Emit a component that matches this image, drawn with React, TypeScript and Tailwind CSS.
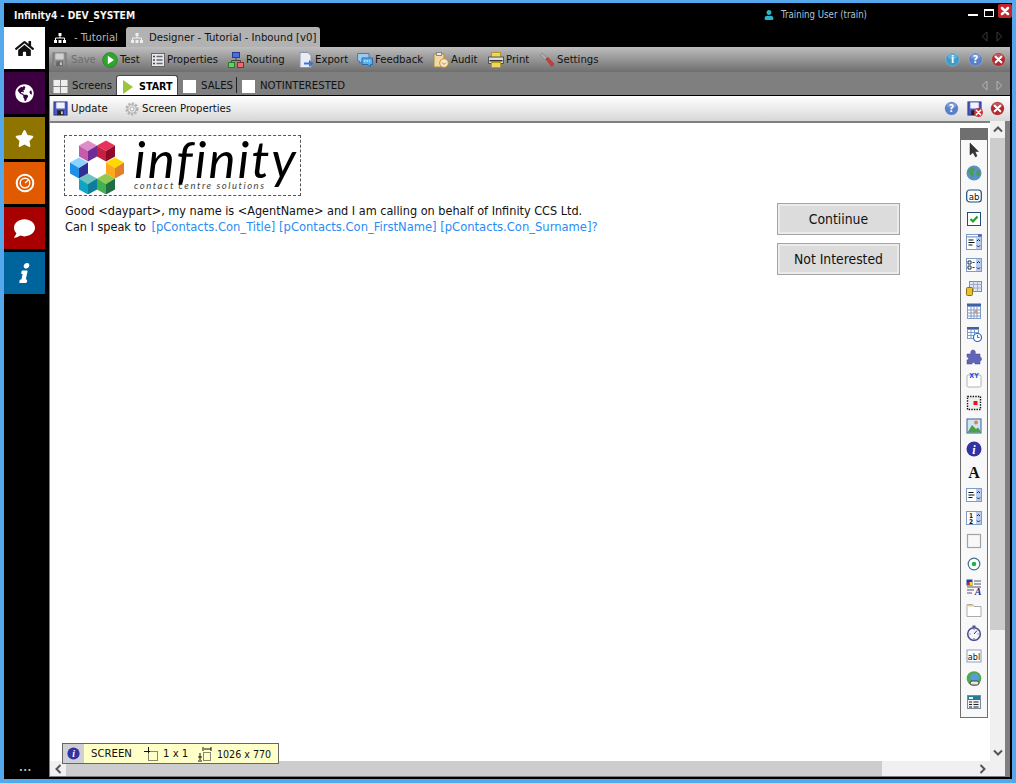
import type { ReactNode } from "react";
import { FaComment, FaGlobeAmericas, FaHome, FaInfo, FaStar, FaUser } from "react-icons/fa";

const font = { fontFamily: '"DejaVu Sans Condensed", "DejaVu Sans", sans-serif', fontStretch: "condensed" } as const;

function Ico({ size = 16, children }: { size?: number; children: ReactNode }) {
	return (
		<svg width={size} height={size} viewBox="0 0 16 16" className="shrink-0">
			{children}
		</svg>
	);
}

function X({ cx = 8, cy = 8, r = 3, w = 2.2 }: { cx?: number; cy?: number; r?: number; w?: number }) {
	return (
		<path
			d={`M${cx - r} ${cy - r}L${cx + r} ${cy + r}M${cx + r} ${cy - r}L${cx - r} ${cy + r}`}
			stroke="#fff"
			strokeWidth={w}
			strokeLinecap="round"
		/>
	);
}

function Orb({ kind }: { kind: "info" | "help" | "close" }) {
	const fill = kind === "info" ? "#3d9cc8" : kind === "help" ? "#5a80c8" : "#b02a30";
	return (
		<Ico size={15}>
			<circle cx="8" cy="8" r="7.2" fill={fill} stroke="#ffffff55" strokeWidth="0.6" />
			<ellipse cx="8" cy="4.6" rx="5" ry="3" fill="#ffffff33" />
			{kind === "close" ? (
				<X />
			) : (
				<text x="8" y="12" textAnchor="middle" fontSize="11" fontWeight="700" fill="#fff" fontFamily="DejaVu Sans">
					{kind === "info" ? "i" : "?"}
				</text>
			)}
		</Ico>
	);
}

function SaveIco({ gray }: { gray?: boolean }) {
	return (
		<Ico size={15}>
			<rect x="1" y="1" width="14" height="14" fill={gray ? "#8d8d8d" : "#4a58c4"} stroke={gray ? "#777" : "#2a3488"} />
			<rect x="3.5" y="1.5" width="9" height="6.5" fill={gray ? "#d0d0d0" : "#f0f4ff"} />
			<rect x="4.5" y="10" width="7" height="5" fill={gray ? "#666" : "#222"} />
			<rect x="8.5" y="11" width="2" height="3" fill="#ccc" />
		</Ico>
	);
}

function Grid2({ size = 15 }: { size?: number }) {
	return (
		<Ico size={size}>
			<rect x="0.5" y="1" width="7" height="6.5" fill="#eee" />
			<rect x="8.5" y="1" width="7" height="6.5" fill="#eee" />
			<rect x="0.5" y="8.5" width="7" height="6.5" fill="#eee" />
			<rect x="8.5" y="8.5" width="7" height="6.5" fill="#eee" />
		</Ico>
	);
}

function OrgIco({ color }: { color: string }) {
	return (
		<svg width="12" height="10" viewBox="0 0 12 10" className="shrink-0">
			<rect x="4.5" y="0" width="3" height="3" fill={color} />
			<path d="M6 3V5M1.5 7V5H10.5V7" stroke={color} fill="none" />
			<rect x="0" y="7" width="3" height="3" fill={color} />
			<rect x="4.5" y="7" width="3" height="3" fill={color} />
			<rect x="9" y="7" width="3" height="3" fill={color} />
		</svg>
	);
}

function TestIco() {
	return (
		<Ico>
			<circle cx="8" cy="8" r="7.4" fill="#2fa52f" stroke="#1a7a1a" strokeWidth="0.6" />
			<path d="M5.8 3.8L12 8L5.8 12.2Z" fill="#fff" />
		</Ico>
	);
}

function PropsIco() {
	return (
		<Ico>
			<rect x="1.5" y="1.5" width="13" height="13" fill="#e8e8e8" stroke="#666" />
			<path d="M3 4.5h2M3 8h2M3 11.5h2" stroke="#445" strokeWidth="1.5" />
			<path d="M6.5 4.5h6M6.5 8h6M6.5 11.5h6" stroke="#667" strokeWidth="1.5" />
		</Ico>
	);
}

function RoutingIco() {
	return (
		<Ico>
			<rect x="4.5" y="0.5" width="7" height="5" fill="#4a6ee0" stroke="#2a3a90" />
			<path d="M8 6v2.5M3.5 11V8.5h9V11" stroke="#444" fill="none" />
			<rect x="0.5" y="10.5" width="6" height="5" fill="#66d066" stroke="#2a7a2a" />
			<rect x="9.5" y="10.5" width="6" height="5" fill="#f06a6a" stroke="#902a2a" />
		</Ico>
	);
}

function ExportIco() {
	return (
		<Ico>
			<path d="M2 0.5H10L13 3.5V15.5H2Z" fill="#e8ecf4" stroke="#8a94a8" />
			<path d="M6 10.5H11V8L15.5 11.5L11 15V12.5H6Z" fill="#3a74d8" />
		</Ico>
	);
}

function FeedbackIco() {
	return (
		<Ico>
			<path d="M0.5 1.5H12V9H5L2.5 11.5V9H0.5Z" fill="#9bc8f0" stroke="#4a7cb0" />
			<path d="M5 6H15.5V12.5H13.5V15L11 12.5H5Z" fill="#5ab0e8" stroke="#2a6ca8" />
			<path d="M7 9h6" stroke="#fff" strokeDasharray="1.5 1" />
		</Ico>
	);
}

function AuditIco() {
	return (
		<Ico>
			<rect x="1" y="2" width="10" height="13" fill="#f0d9a8" stroke="#b08a40" />
			<rect x="3.5" y="0.5" width="5" height="3" fill="#e8e8e8" stroke="#888" />
			<circle cx="11" cy="11" r="4.3" fill="#f8e8c8" stroke="#d88a20" />
			<path d="M9 10.5l2 2 2-2" stroke="#888" fill="none" />
		</Ico>
	);
}

function PrintIco() {
	return (
		<Ico>
			<rect x="3.5" y="0.5" width="9" height="5" fill="#f0d860" stroke="#b09a20" />
			<rect x="0.5" y="5" width="15" height="6.5" fill="#dcdcdc" stroke="#555" />
			<rect x="1.5" y="8" width="13" height="1.5" fill="#333" />
			<rect x="3.5" y="10.5" width="9" height="5" fill="#f0d860" stroke="#b09a20" />
		</Ico>
	);
}

function WrenchIco() {
	return (
		<Ico>
			<path d="M1 3L3 1L8 6L6 8Z" fill="#aaa" stroke="#777" strokeWidth="0.5" />
			<path d="M7 7L9 5.5L15 12L12.8 14.5Z" fill="#d03a3a" stroke="#902020" strokeWidth="0.5" />
		</Ico>
	);
}

function GearIco() {
	return (
		<Ico>
			<circle cx="8" cy="8" r="5.4" fill="none" stroke="#b4b4b4" strokeWidth="2.4" strokeDasharray="2.2 1.3" />
			<circle cx="8" cy="8" r="4.2" fill="#eaeaea" stroke="#aaa" />
			<circle cx="8" cy="8" r="2" fill="#f8f8f8" stroke="#aaa" />
		</Ico>
	);
}

function ToolItem({ icon, label, gray, className }: { icon: ReactNode; label: string; gray?: boolean; className?: string }) {
	return (
		<div className={`flex items-center whitespace-nowrap ${className ?? "gap-[2px]"}`}>
			{icon}
			<span className={gray ? "text-[#6e6e6e]" : "text-[#111]"}>{label}</span>
		</div>
	);
}

function Arrows({ color }: { color: string }) {
	return (
		<div className="flex items-center gap-[8px]">
			<svg width="7" height="11" viewBox="0 0 7 11">
				<path d="M6 1L1 5.5L6 10Z" fill="none" stroke={color} />
			</svg>
			<svg width="7" height="11" viewBox="0 0 7 11">
				<path d="M1 1L6 5.5L1 10Z" fill="none" stroke={color} />
			</svg>
		</div>
	);
}

function Cube({ cx, cy, top, left, right }: { cx: number; cy: number; top: string; left: string; right: string }) {
	return (
		<g>
			<path d={`M${cx} ${cy - 10.5}L${cx + 9} ${cy - 5.5}L${cx} ${cy}L${cx - 9} ${cy - 5.5}Z`} fill={top} />
			<path d={`M${cx - 9} ${cy - 5.5}L${cx} ${cy}V${cy + 10.5}L${cx - 9} ${cy + 5.5}Z`} fill={left} />
			<path d={`M${cx + 9} ${cy - 5.5}L${cx} ${cy}V${cy + 10.5}L${cx + 9} ${cy + 5.5}Z`} fill={right} />
		</g>
	);
}

function Logo() {
	const logoFont = { fontFamily: 'Lato, sans-serif', fontStretch: "normal" } as const;
	return (
		<div className="absolute left-[14px] top-[12px] flex h-[61px] w-[237px] border border-dashed border-[#555] bg-white">
			<svg width="56" height="56" viewBox="0 0 56 56" className="ml-[4px] mt-[2px] shrink-0">
				<Cube cx={19} cy={13} top="#e08cc8" left="#c45cab" right="#6f2c96" />
				<Cube cx={37} cy={13} top="#e8305c" left="#c42040" right="#8c0a28" />
				<Cube cx={10} cy={30} top="#8ad4ff" left="#1e90e8" right="#2e3096" />
				<Cube cx={46} cy={30} top="#ffd800" left="#ffa81e" right="#e08028" />
				<Cube cx={19} cy={46} top="#70c4c0" left="#10a4c4" right="#107c9c" />
				<Cube cx={37} cy={46} top="#90c850" left="#40b050" right="#1e7040" />
			</svg>
			<div className="ml-[9px] flex flex-col">
				<span className="mt-[-7px] h-[50px] text-[51px] leading-[60px] tracking-[2px] text-black italic" style={logoFont}>
					infinity
				</span>
				<span className="mt-[1px] whitespace-nowrap text-[9.5px] leading-[12px] tracking-[1.55px] text-[#444] italic" style={logoFont}>
					contact centre solutions
				</span>
			</div>
		</div>
	);
}

function SpinBox({ children, tall }: { children: ReactNode; tall?: boolean }) {
	return (
		<Ico>
			{tall && <rect x="0.5" y="0.5" width="15" height="2.5" fill="#fff" stroke="#7f9cc8" />}
			{tall && <rect x="12" y="0.5" width="3.5" height="2.5" fill="#3f5fa8" />}
			<rect x="0.5" y={tall ? 3 : 1.5} width="15" height={tall ? 12.5 : 13} fill="#fff" stroke="#7f9cc8" />
			<rect x="10" y={tall ? 3.5 : 2} width="5" height={tall ? 11.5 : 12} fill="#b8cdf0" />
			<path d={tall ? "M11 7l1.5-1.5L14 7M11 11.5l1.5 1.5L14 11.5" : "M11 6l1.5-1.5L14 6M11 10.5l1.5 1.5L14 10.5"} stroke="#223" fill="none" />
			{children}
		</Ico>
	);
}

const toolbox: ReactNode[] = [
	<Ico key="cursor">
		<path d="M4 1V13L7 10.5L9.5 15L11 14L9 9.5H12.5Z" fill="#333" stroke="#222" strokeWidth="0.5" />
	</Ico>,
	<Ico key="globe">
		<circle cx="8" cy="8" r="7.5" fill="#5a8fd0" />
		<path d="M3 4L7 2L9 4L7 7L8 10L6 13L4 9L2 7ZM10 6L14 5L14.5 10L11 12Z" fill="#4c9e4c" />
	</Ico>,
	<Ico key="ab">
		<rect x="0.7" y="2" width="14.6" height="12" rx="3" fill="#fff" stroke="#1f4f78" strokeWidth="1.2" />
		<text x="8" y="11.5" textAnchor="middle" fontSize="9.5" fill="#111" fontFamily="DejaVu Sans">ab</text>
	</Ico>,
	<Ico key="check">
		<rect x="1.5" y="1.5" width="13" height="13" fill="#fff" stroke="#1f4f78" />
		<path d="M4.5 8L7 10.5L11.5 5.5" stroke="#22a022" strokeWidth="2.2" fill="none" />
	</Ico>,
	<SpinBox key="list" tall>
		<path d="M2.5 6h5M2.5 8.5h6M2.5 11h4" stroke="#111" />
	</SpinBox>,
	<SpinBox key="checks">
		<path d="M2 4h3v3H2ZM2 9h3v3H2Z" fill="none" stroke="#234" />
		<path d="M6.5 5.5h2M6.5 10.5h2" stroke="#234" />
	</SpinBox>,
	<Ico key="dbgrid">
		<rect x="3.5" y="1.5" width="12" height="10" fill="#dfe6f2" stroke="#7f8ca8" />
		<path d="M3.5 4.5h12M3.5 8h12M7.5 1.5v10M11.5 1.5v10" stroke="#a0accc" />
		<rect x="0.5" y="7.5" width="6" height="8" rx="1" fill="#e8c030" stroke="#8a7010" />
	</Ico>,
	<Ico key="cal">
		<rect x="1" y="0.5" width="14" height="3" fill="#3f5fa8" />
		<rect x="1.5" y="3.5" width="13" height="12" fill="#fff" stroke="#7f9cc8" />
		<path d="M1.5 7h13M1.5 10h13M1.5 13h13M5 3.5v12M8 3.5v12M11 3.5v12" stroke="#7f9cc8" />
		<rect x="8.5" y="7.5" width="2.5" height="2.5" fill="#e88a60" />
	</Ico>,
	<Ico key="calclock">
		<rect x="1" y="1" width="12" height="2.5" fill="#3f5fa8" />
		<rect x="1.5" y="3.5" width="11" height="9" fill="#fff" stroke="#7f9cc8" />
		<path d="M1.5 6.5h11M1.5 9.5h11M5 3.5v9M8.5 3.5v9" stroke="#7f9cc8" />
		<circle cx="11.5" cy="11.5" r="4" fill="#fff" stroke="#2a6cd8" strokeWidth="1.2" />
		<path d="M11.5 9v2.5h2" stroke="#2a6cd8" fill="none" />
	</Ico>,
	<Ico key="puzzle">
		<path d="M1 5H5C4 2 6 1 7 1C9 1 10 3 9 5H14V8C16 8 16 12 14 12V15H9C9 13 6 13 6 15H1V11C3 11 3 8 1 8Z" fill="#6264b8" stroke="#44468c" strokeWidth="0.5" />
	</Ico>,
	<Ico key="xy">
		<rect x="1" y="3" width="14" height="12" rx="1.5" fill="#fff" stroke="#aab0b8" />
		<text x="8" y="5.5" textAnchor="middle" fontSize="7" fontWeight="700" fill="#1a50d8" fontFamily="DejaVu Sans">XY</text>
	</Ico>,
	<Ico key="select">
		<rect x="1.5" y="1.5" width="13" height="13" fill="#eee" stroke="#111" strokeWidth="1.4" strokeDasharray="1.4 1.2" />
		<rect x="7.5" y="6" width="4" height="4" fill="#f01010" />
	</Ico>,
	<Ico key="image">
		<rect x="1" y="1" width="14" height="14" fill="#cfe4f4" stroke="#3a5f98" />
		<path d="M1.5 14.5L6 7L10 11L12 9.5L14.5 13V14.5Z" fill="#4c9e4c" />
		<circle cx="10" cy="4.5" r="2" fill="#e8843c" />
	</Ico>,
	<Ico key="info">
		<circle cx="8" cy="8" r="7.5" fill="#3232a4" />
		<text x="8" y="12.5" textAnchor="middle" fontSize="12" fontWeight="700" fontStyle="italic" fill="#fff" fontFamily="Liberation Serif">i</text>
	</Ico>,
	<Ico key="A">
		<text x="8" y="14" textAnchor="middle" fontSize="16" fontWeight="700" fill="#111" fontFamily="Liberation Serif">A</text>
	</Ico>,
	<SpinBox key="text">
		<path d="M2.5 5.5h5M2.5 8h6M2.5 10.5h4" stroke="#111" />
	</SpinBox>,
	<SpinBox key="num">
		<text x="5" y="8" textAnchor="middle" fontSize="6.5" fontWeight="700" fill="#111" fontFamily="DejaVu Sans">1</text>
		<text x="5" y="14" textAnchor="middle" fontSize="6.5" fontWeight="700" fill="#111" fontFamily="DejaVu Sans">2</text>
	</SpinBox>,
	<Ico key="square">
		<rect x="1.5" y="1.5" width="13" height="13" fill="#f8f8f8" stroke="#a0a4a8" strokeWidth="1.2" />
	</Ico>,
	<Ico key="radio">
		<circle cx="8" cy="8" r="5.8" fill="#fff" stroke="#3f6f98" strokeWidth="1.2" />
		<circle cx="8" cy="8" r="2.3" fill="#22b04c" />
	</Ico>,
	<Ico key="format">
		<rect x="0.5" y="0.5" width="6" height="6" fill="#2a3aa8" />
		<rect x="3.5" y="3" width="3" height="3" fill="#f0e020" />
		<rect x="1" y="3.5" width="2.5" height="2.5" fill="#d82020" />
		<path d="M8 2h7M8 5h7M1 8h14M1 11h7M1 14h5" stroke="#556" />
		<text x="12" y="15.5" textAnchor="middle" fontSize="10" fontWeight="700" fontStyle="italic" fill="#1a2f98" fontFamily="Liberation Serif">A</text>
	</Ico>,
	<Ico key="folder">
		<path d="M1 14.5V2.5H6.5L8 4.5H15V14.5Z" fill="#fff" stroke="#a8acb0" />
		<path d="M1.5 3H6.3L7.5 4.5H1.5Z" fill="#f0d060" />
	</Ico>,
	<Ico key="watch">
		<circle cx="8" cy="9" r="6.3" fill="#f4f4fa" stroke="#4a4a90" strokeWidth="1.5" />
		<rect x="6.5" y="0.5" width="3" height="2" fill="#4a4a90" />
		<path d="M8 9L11 5.5" stroke="#333" />
		<path d="M8 4v1M8 13v1M3.5 9h1M11.5 9h1" stroke="#666" />
	</Ico>,
	<Ico key="abl">
		<rect x="1" y="2" width="14" height="12" fill="#fff" stroke="#8aa0c0" />
		<text x="8" y="11.5" textAnchor="middle" fontSize="9" fill="#111" fontFamily="DejaVu Sans">abl</text>
	</Ico>,
	<Ico key="weblink">
		<circle cx="8" cy="7.5" r="7.3" fill="#4caa4c" />
		<path d="M5 3L11 2L14 7L9 11L4 8Z" fill="#5a9cd8" />
		<rect x="4" y="10" width="9" height="4" rx="2" fill="#e8e8e8" stroke="#444" />
	</Ico>,
	<Ico key="form">
		<rect x="1.5" y="1.5" width="13" height="13" fill="#f0f0f0" stroke="#7a8a9a" />
		<rect x="2" y="2" width="12" height="4" fill="#1f7f98" />
		<rect x="3" y="3" width="4" height="2" fill="#eee" />
		<path d="M3 8h3M7.5 8h5M3 10.5h3M7.5 10.5h5M3 13h3M7.5 13h5" stroke="#222" />
	</Ico>,
];

function CanvasButton({ label, className }: { label: string; className: string }) {
	return (
		<div className={`absolute flex h-[32px] w-[123px] items-center justify-center border border-[#a5a5a5] bg-[#dcdcdc] text-[13.8px] text-[#111] shadow-[inset_0_0_0_2px_#ebebeb] ${className}`}>
			{label}
		</div>
	);
}

export default function App() {
	return (
		<div
			className="flex h-[783px] w-[1016px] flex-col overflow-hidden bg-[#56a8ec] pb-[4px] pl-[4px] pr-[4px] pt-[3px] text-[11.25px] leading-[16px]"
			style={font}
		>
			<div className="flex min-h-0 flex-1 flex-col bg-black">
				{/* title bar */}
				<div className="flex h-[24px] shrink-0 items-start justify-between text-white">
					<span className="ml-[10px] mt-[4px] text-[10.25px] font-bold text-[#f4f4f4]">Infinity4 - DEV_SYSTEM</span>
					<div className="flex items-start">
						<div className="mt-[4px] mr-[101px] flex items-center gap-[7px] text-[9.6px] text-[#a9c6d8]">
							<FaUser className="text-[10px] text-[#2bb6c8]" />
							<span>Training User (train)</span>
						</div>
						<div className="mt-[11px] h-[2px] w-[10px] bg-white" />
						<div className="ml-[6px] mt-[6px] h-[8px] w-[10px] border border-t-2 border-white" />
						<div className="ml-[4px] mt-[1px] flex h-[14px] w-[14px] items-center justify-center rounded-[2px] bg-[#c4242a]">
							<Ico size={14}>
								<X w={3} r={3.4} />
							</Ico>
						</div>
					</div>
				</div>

				<div className="flex min-h-0 flex-1">
					{/* sidebar */}
					<div className="flex w-[45px] shrink-0 flex-col text-white">
						<div className="flex h-[42px] w-[41px] items-center justify-center bg-white text-[19px] text-[#111]">
							<FaHome />
						</div>
						<div className="mt-[3px] flex h-[42px] w-[41px] items-center justify-center bg-[#3c0040] text-[19px]">
							<FaGlobeAmericas />
						</div>
						<div className="mt-[3px] flex h-[42px] w-[41px] items-center justify-center bg-[#8f7400] text-[19px]">
							<FaStar />
						</div>
						<div className="mt-[3px] flex h-[42px] w-[41px] items-center justify-center bg-[#e05a00]">
							<svg width="20" height="20" viewBox="0 0 20 20">
								<circle cx="10" cy="10" r="8.3" fill="none" stroke="#fff" strokeWidth="2" />
								<circle cx="10" cy="10" r="4.8" fill="none" stroke="#fff" strokeWidth="1.4" />
								<path d="M10 10L13.5 7" stroke="#fff" strokeWidth="1.4" />
							</svg>
						</div>
						<div className="mt-[3px] flex h-[42px] w-[41px] items-center justify-center bg-[#a80000] text-[21px]">
							<FaComment />
						</div>
						<div className="mt-[3px] flex h-[42px] w-[41px] items-center justify-center bg-[#00649c] text-[20px]">
							<FaInfo className="-skew-x-12" />
						</div>
						<div className="mt-auto mb-[5px] pl-[15px] text-[11px] leading-[12px] font-bold tracking-[0.5px] text-[#bbb]">...</div>
					</div>

					{/* main */}
					<div className="flex min-w-0 flex-1 flex-col pr-[2px] pb-[2px]">
						<div className="flex h-[20px] shrink-0 items-end whitespace-nowrap">
							<div className="flex h-[20px] w-[77px] items-center gap-[6px] pl-[5px] pt-[1px] text-[#b4b4b4]">
								<OrgIco color="#fff" />
								<span className="ml-[2px]">- Tutorial</span>
							</div>
							<div className="flex h-[20px] w-[194px] items-center gap-[6px] rounded-t-[3px] bg-[#b2b2b2] pl-[5px] pt-[1px] text-[#111]">
								<OrgIco color="#eee" />
								<span>Designer - Tutorial - Inbound [v0]</span>
							</div>
							<div className="ml-auto mr-[7px] mb-[5px]">
								<Arrows color="#3a3a3a" />
							</div>
						</div>

						<div className="flex h-[25px] shrink-0 items-center bg-gradient-to-b from-[#bebebe] to-[#6f6f6f] pl-[3px] pr-[4px]">
							<ToolItem icon={<SaveIco gray />} label="Save" gray className="w-[50px] gap-[4px]" />
							<ToolItem icon={<TestIco />} label="Test" className="w-[48px] gap-[2px]" />
							<ToolItem icon={<PropsIco />} label="Properties" className="w-[78px] gap-[1px]" />
							<ToolItem icon={<RoutingIco />} label="Routing" className="w-[70px] gap-[2px]" />
							<ToolItem icon={<ExportIco />} label="Export" className="w-[59px] gap-[1px]" />
							<ToolItem icon={<FeedbackIco />} label="Feedback" className="w-[76px] gap-[2px]" />
							<ToolItem icon={<AuditIco />} label="Audit" className="w-[55px] gap-[2px]" />
							<ToolItem icon={<PrintIco />} label="Print" className="w-[51px] gap-[2px]" />
							<ToolItem icon={<WrenchIco />} label="Settings" />
							<div className="ml-auto flex items-center gap-[8px]">
								<Orb kind="info" />
								<Orb kind="help" />
								<Orb kind="close" />
							</div>
						</div>

						<div className="flex min-h-0 flex-1 flex-col bg-[#7f7f7f] pb-[1px]">
							<div className="flex h-[23px] shrink-0 items-end whitespace-nowrap">
								<div className="ml-[4px] flex h-[20px] w-[63px] items-center gap-[4px] pt-[2px] text-[#111]">
									<Grid2 />
									<span>Screens</span>
								</div>
								<div className="flex h-[20px] w-[62px] items-center gap-[6px] rounded-t-[3px] border border-b-0 border-[#444] bg-white pl-[6px] pt-[2px] text-[10.7px] font-bold text-black">
									<svg width="10" height="14" viewBox="0 0 10 14" className="shrink-0">
										<path d="M0 0L10 7L0 14Z" fill="#9cc43c" />
									</svg>
									<span>START</span>
								</div>
								<div className="ml-[5px] flex h-[20px] w-[53px] items-center gap-[5px] pt-[2px] text-[#111]">
									<div className="h-[13px] w-[13px] bg-white" />
									<span>SALES</span>
								</div>
								<div className="mb-[2px] mr-[5px] h-[16px] w-[1px] bg-[#222]" />
								<div className="flex h-[20px] items-center gap-[5px] pt-[2px] text-[#111]">
									<div className="h-[13px] w-[13px] bg-white" />
									<span>NOTINTERESTED</span>
								</div>
								<div className="ml-auto mb-[4px] mr-[7px]">
									<Arrows color="#b4b4b4" />
								</div>
							</div>

							<div className="h-[1px] shrink-0 bg-black" />

							<div className="flex min-h-0 flex-1 flex-col pl-[1px]">
								<div className="flex h-[25px] shrink-0 items-center bg-gradient-to-b from-white to-[#d8d8d8] pl-[3px] pr-[5px]">
									<ToolItem icon={<SaveIco />} label="Update" className="w-[71px] gap-[3px]" />
									<ToolItem icon={<GearIco />} label="Screen Properties" className="gap-[2px] text-[#333]" />
									<div className="ml-auto flex items-center gap-[8px]">
										<Orb kind="help" />
										<div className="relative">
											<SaveIco />
											<div className="absolute bottom-[-1px] right-[-1px] flex h-[9px] w-[9px] items-center justify-center rounded-full bg-[#d0303a]">
												<svg width="7" height="7" viewBox="0 0 16 16">
													<X w={3.5} r={5} />
												</svg>
											</div>
										</div>
										<Orb kind="close" />
									</div>
								</div>

								<div className="flex min-h-0 flex-1">
									<div className="flex min-w-0 flex-1 flex-col">
										{/* design canvas */}
										<div className="relative min-h-0 flex-1 border-t-2 border-[#808080] bg-white pl-[1px] text-[#111]">
											<Logo />
											<div className="absolute left-[15px] top-[80px] text-[12.55px] leading-[16px] whitespace-nowrap">
												<div>{"Good <daypart>, my name is <AgentName> and I am calling on behalf of Infinity CCS Ltd."}</div>
												<div>
													Can I speak to{" "}
													<span className="ml-[2px] text-[12.85px] text-[#2a8cf4]">[pContacts.Con_Title] [pContacts.Con_FirstName] [pContacts.Con_Surname]?</span>
												</div>
											</div>
											<CanvasButton label="Contiinue" className="left-[727px] top-[80px]" />
											<CanvasButton label="Not Interested" className="left-[727px] top-[120px]" />

											{/* floating toolbox */}
											<div className="absolute left-[910px] top-[5px] flex h-[590px] w-[28px] flex-col border border-[#6f6f6f] bg-[#f8f8f8]">
												<div className="mb-[-2px] h-[11px] shrink-0 bg-[#6f6f6f]" />
												{toolbox.map((icon, i) => (
													<div key={i} className="flex h-[23px] shrink-0 items-center justify-center">
														{icon}
													</div>
												))}
											</div>

											{/* status strip */}
											<div className="absolute bottom-[-3px] left-[12px] z-10 flex h-[21px] w-[217px] items-center whitespace-nowrap border border-[#666] bg-[#ffffc8]">
												<div className="flex h-full w-[21px] items-center justify-center bg-[#d0d0d4]">
													<Ico size={13}>
														<circle cx="8" cy="8" r="7.5" fill="#3232a4" />
														<text x="8" y="12.5" textAnchor="middle" fontSize="12" fontWeight="700" fontStyle="italic" fill="#fff" fontFamily="Liberation Serif">i</text>
													</Ico>
												</div>
												<span className="ml-[7px] w-[52px]">SCREEN</span>
												<Ico>
													<path d="M5.5 1V7M1 5.5H7" stroke="#111" />
													<rect x="5.5" y="5.5" width="9" height="9" fill="none" stroke="#111" strokeDasharray="1 1" />
												</Ico>
												<span className="ml-[4px] w-[33px]">1 x 1</span>
												<Ico size={16}>
													<path d="M7 1V5M8 3H15M15 1V5M2 11H6M4 7V14M2 15H6" stroke="#111" fill="none" />
													<rect x="7.5" y="6.5" width="7" height="8" fill="none" stroke="#111" strokeDasharray="1 1" />
												</Ico>
												<span className="ml-[5px] text-[10.6px]">1026 x 770</span>
											</div>
										</div>

										{/* horizontal scrollbar */}
										<div className="flex h-[15px] shrink-0 bg-[#f0f0f0]">
											<div className="flex w-[16px] items-center justify-center">
												<svg width="7" height="10" viewBox="0 0 7 10">
													<path d="M5.5 1L1.5 5L5.5 9" fill="none" stroke="#555" strokeWidth="2" />
												</svg>
											</div>
											<div className="w-[816px] bg-[#cdcdcd]" />
											<div className="ml-auto flex w-[16px] items-center justify-center">
												<svg width="7" height="10" viewBox="0 0 7 10">
													<path d="M1.5 1L5.5 5L1.5 9" fill="none" stroke="#555" strokeWidth="2" />
												</svg>
											</div>
										</div>
									</div>

									{/* vertical scrollbar */}
									<div className="flex w-[15px] shrink-0 flex-col bg-[#f0f0f0]">
										<div className="flex h-[17px] shrink-0 items-center justify-center">
											<svg width="10" height="7" viewBox="0 0 10 7">
												<path d="M1 5.5L5 1.5L9 5.5" fill="none" stroke="#555" strokeWidth="2" />
											</svg>
										</div>
										<div className="h-[492px] shrink-0 bg-[#cdcdcd]" />
										<div className="mt-auto mb-[16px] flex h-[15px] shrink-0 items-center justify-center">
											<svg width="10" height="7" viewBox="0 0 10 7">
												<path d="M1 1.5L5 5.5L9 1.5" fill="none" stroke="#555" strokeWidth="2" />
											</svg>
										</div>
									</div>
									<div className="w-[5px] shrink-0" />
								</div>
							</div>
						</div>
					</div>
				</div>
			</div>
		</div>
	);
}
